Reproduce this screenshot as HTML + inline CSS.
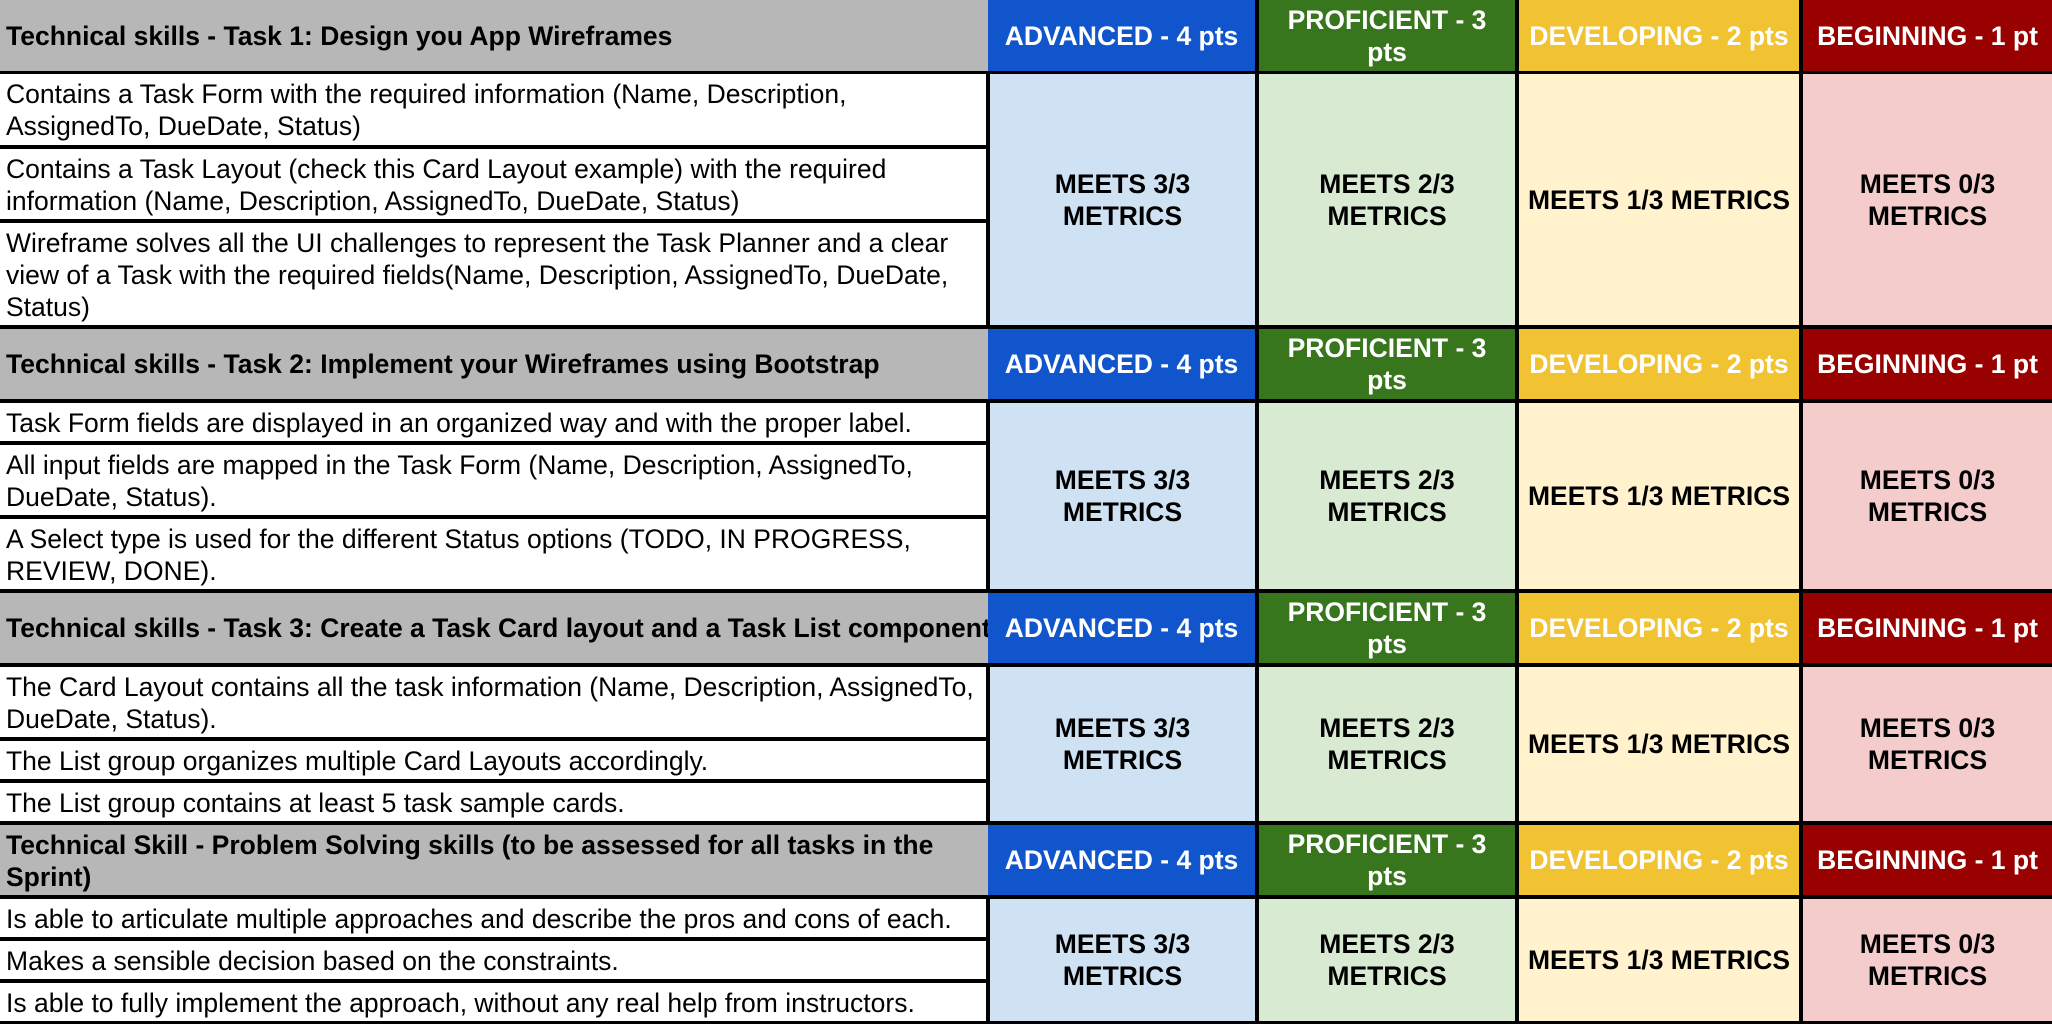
<!DOCTYPE html>
<html><head><meta charset="utf-8"><style>
html,body{margin:0;padding:0}
body{width:2052px;height:1024px;background:#000;position:relative;overflow:hidden;font-family:"Liberation Sans",Arial,sans-serif;font-size:26.5px;color:#000}
.c{position:absolute;overflow:hidden;box-sizing:border-box}
.t{background:#fff;padding:4px 0 0 6px;line-height:32px}
.g{background:#b7b7b7;font-weight:bold;padding:0 0 0 6px;line-height:32px;display:flex;align-items:center;white-space:nowrap}
.g.two{white-space:normal;align-items:flex-start;padding-top:4px}
.h{color:#fff;font-weight:bold;display:flex;align-items:center;justify-content:center;text-align:center;line-height:32px;white-space:nowrap}
.m{font-weight:bold;display:flex;align-items:center;justify-content:center;text-align:center;line-height:32px;white-space:nowrap}
.b1{background:#1155cc}.b2{background:#38761d}.b3{background:#f1c232}.b4{background:#990000}
.l1{background:#cfe2f3}.l2{background:#d9ead3}.l3{background:#fff2cc}.l4{background:#f4cccc}
</style></head><body>

<div class="c g" style="left:0;top:0;width:988px;height:71px">Technical skills - Task 1: Design you App Wireframes</div>
<div class="c h b1" style="left:988px;top:0;width:267px;height:71px">ADVANCED - 4 pts</div>
<div class="c h b2" style="left:1259px;top:0;width:256px;height:71px">PROFICIENT - 3<br>pts</div>
<div class="c h b3" style="left:1519px;top:0;width:280px;height:71px">DEVELOPING - 2 pts</div>
<div class="c h b4" style="left:1803px;top:0;width:249px;height:71px">BEGINNING - 1 pt</div>

<div class="c t" style="left:0;top:74px;width:986px;height:71px">Contains a Task Form with the required information (Name, Description,<br>AssignedTo, DueDate, Status)</div>
<div class="c t" style="left:0;top:149px;width:986px;height:70px">Contains a Task Layout (check this Card Layout example) with the required<br>information (Name, Description, AssignedTo, DueDate, Status)</div>
<div class="c t" style="left:0;top:223px;width:986px;height:102px">Wireframe solves all the UI challenges to represent the Task Planner and a clear<br>view of a Task with the required fields(Name, Description, AssignedTo, DueDate,<br>Status)</div>
<div class="c m l1" style="left:990px;top:74px;width:265px;height:251px">MEETS 3/3<br>METRICS</div>
<div class="c m l2" style="left:1259px;top:74px;width:256px;height:251px">MEETS 2/3<br>METRICS</div>
<div class="c m l3" style="left:1519px;top:74px;width:280px;height:251px">MEETS 1/3 METRICS</div>
<div class="c m l4" style="left:1803px;top:74px;width:249px;height:251px">MEETS 0/3<br>METRICS</div>

<div class="c g" style="left:0;top:329px;width:988px;height:70px">Technical skills - Task 2: Implement your Wireframes using Bootstrap</div>
<div class="c h b1" style="left:988px;top:329px;width:267px;height:70px">ADVANCED - 4 pts</div>
<div class="c h b2" style="left:1259px;top:329px;width:256px;height:70px">PROFICIENT - 3<br>pts</div>
<div class="c h b3" style="left:1519px;top:329px;width:280px;height:70px">DEVELOPING - 2 pts</div>
<div class="c h b4" style="left:1803px;top:329px;width:249px;height:70px">BEGINNING - 1 pt</div>

<div class="c t" style="left:0;top:403px;width:986px;height:38px">Task Form fields are displayed in an organized way and with the proper label.</div>
<div class="c t" style="left:0;top:445px;width:986px;height:70px">All input fields are mapped in the Task Form (Name, Description, AssignedTo,<br>DueDate, Status).</div>
<div class="c t" style="left:0;top:519px;width:986px;height:70px">A Select type is used for the different Status options (TODO, IN PROGRESS,<br>REVIEW, DONE).</div>
<div class="c m l1" style="left:990px;top:403px;width:265px;height:186px">MEETS 3/3<br>METRICS</div>
<div class="c m l2" style="left:1259px;top:403px;width:256px;height:186px">MEETS 2/3<br>METRICS</div>
<div class="c m l3" style="left:1519px;top:403px;width:280px;height:186px">MEETS 1/3 METRICS</div>
<div class="c m l4" style="left:1803px;top:403px;width:249px;height:186px">MEETS 0/3<br>METRICS</div>

<div class="c g" style="left:0;top:593px;width:988px;height:70px">Technical skills - Task 3: Create a Task Card layout and a Task List component</div>
<div class="c h b1" style="left:988px;top:593px;width:267px;height:70px">ADVANCED - 4 pts</div>
<div class="c h b2" style="left:1259px;top:593px;width:256px;height:70px">PROFICIENT - 3<br>pts</div>
<div class="c h b3" style="left:1519px;top:593px;width:280px;height:70px">DEVELOPING - 2 pts</div>
<div class="c h b4" style="left:1803px;top:593px;width:249px;height:70px">BEGINNING - 1 pt</div>

<div class="c t" style="left:0;top:667px;width:986px;height:70px">The Card Layout contains all the task information (Name, Description, AssignedTo,<br>DueDate, Status).</div>
<div class="c t" style="left:0;top:741px;width:986px;height:38px">The List group organizes multiple Card Layouts accordingly.</div>
<div class="c t" style="left:0;top:783px;width:986px;height:38px">The List group contains at least 5 task sample cards.</div>
<div class="c m l1" style="left:990px;top:667px;width:265px;height:154px">MEETS 3/3<br>METRICS</div>
<div class="c m l2" style="left:1259px;top:667px;width:256px;height:154px">MEETS 2/3<br>METRICS</div>
<div class="c m l3" style="left:1519px;top:667px;width:280px;height:154px">MEETS 1/3 METRICS</div>
<div class="c m l4" style="left:1803px;top:667px;width:249px;height:154px">MEETS 0/3<br>METRICS</div>

<div class="c g two" style="left:0;top:825px;width:988px;height:70px">Technical Skill - Problem Solving skills (to be assessed for all tasks in the<br>Sprint)</div>
<div class="c h b1" style="left:988px;top:825px;width:267px;height:70px">ADVANCED - 4 pts</div>
<div class="c h b2" style="left:1259px;top:825px;width:256px;height:70px">PROFICIENT - 3<br>pts</div>
<div class="c h b3" style="left:1519px;top:825px;width:280px;height:70px">DEVELOPING - 2 pts</div>
<div class="c h b4" style="left:1803px;top:825px;width:249px;height:70px">BEGINNING - 1 pt</div>

<div class="c t" style="left:0;top:899px;width:986px;height:38px">Is able to articulate multiple approaches and describe the pros and cons of each.</div>
<div class="c t" style="left:0;top:941px;width:986px;height:38px">Makes a sensible decision based on the constraints.</div>
<div class="c t" style="left:0;top:983px;width:986px;height:38px">Is able to fully implement the approach, without any real help from instructors.</div>
<div class="c m l1" style="left:990px;top:899px;width:265px;height:122px">MEETS 3/3<br>METRICS</div>
<div class="c m l2" style="left:1259px;top:899px;width:256px;height:122px">MEETS 2/3<br>METRICS</div>
<div class="c m l3" style="left:1519px;top:899px;width:280px;height:122px">MEETS 1/3 METRICS</div>
<div class="c m l4" style="left:1803px;top:899px;width:249px;height:122px">MEETS 0/3<br>METRICS</div>

</body></html>
